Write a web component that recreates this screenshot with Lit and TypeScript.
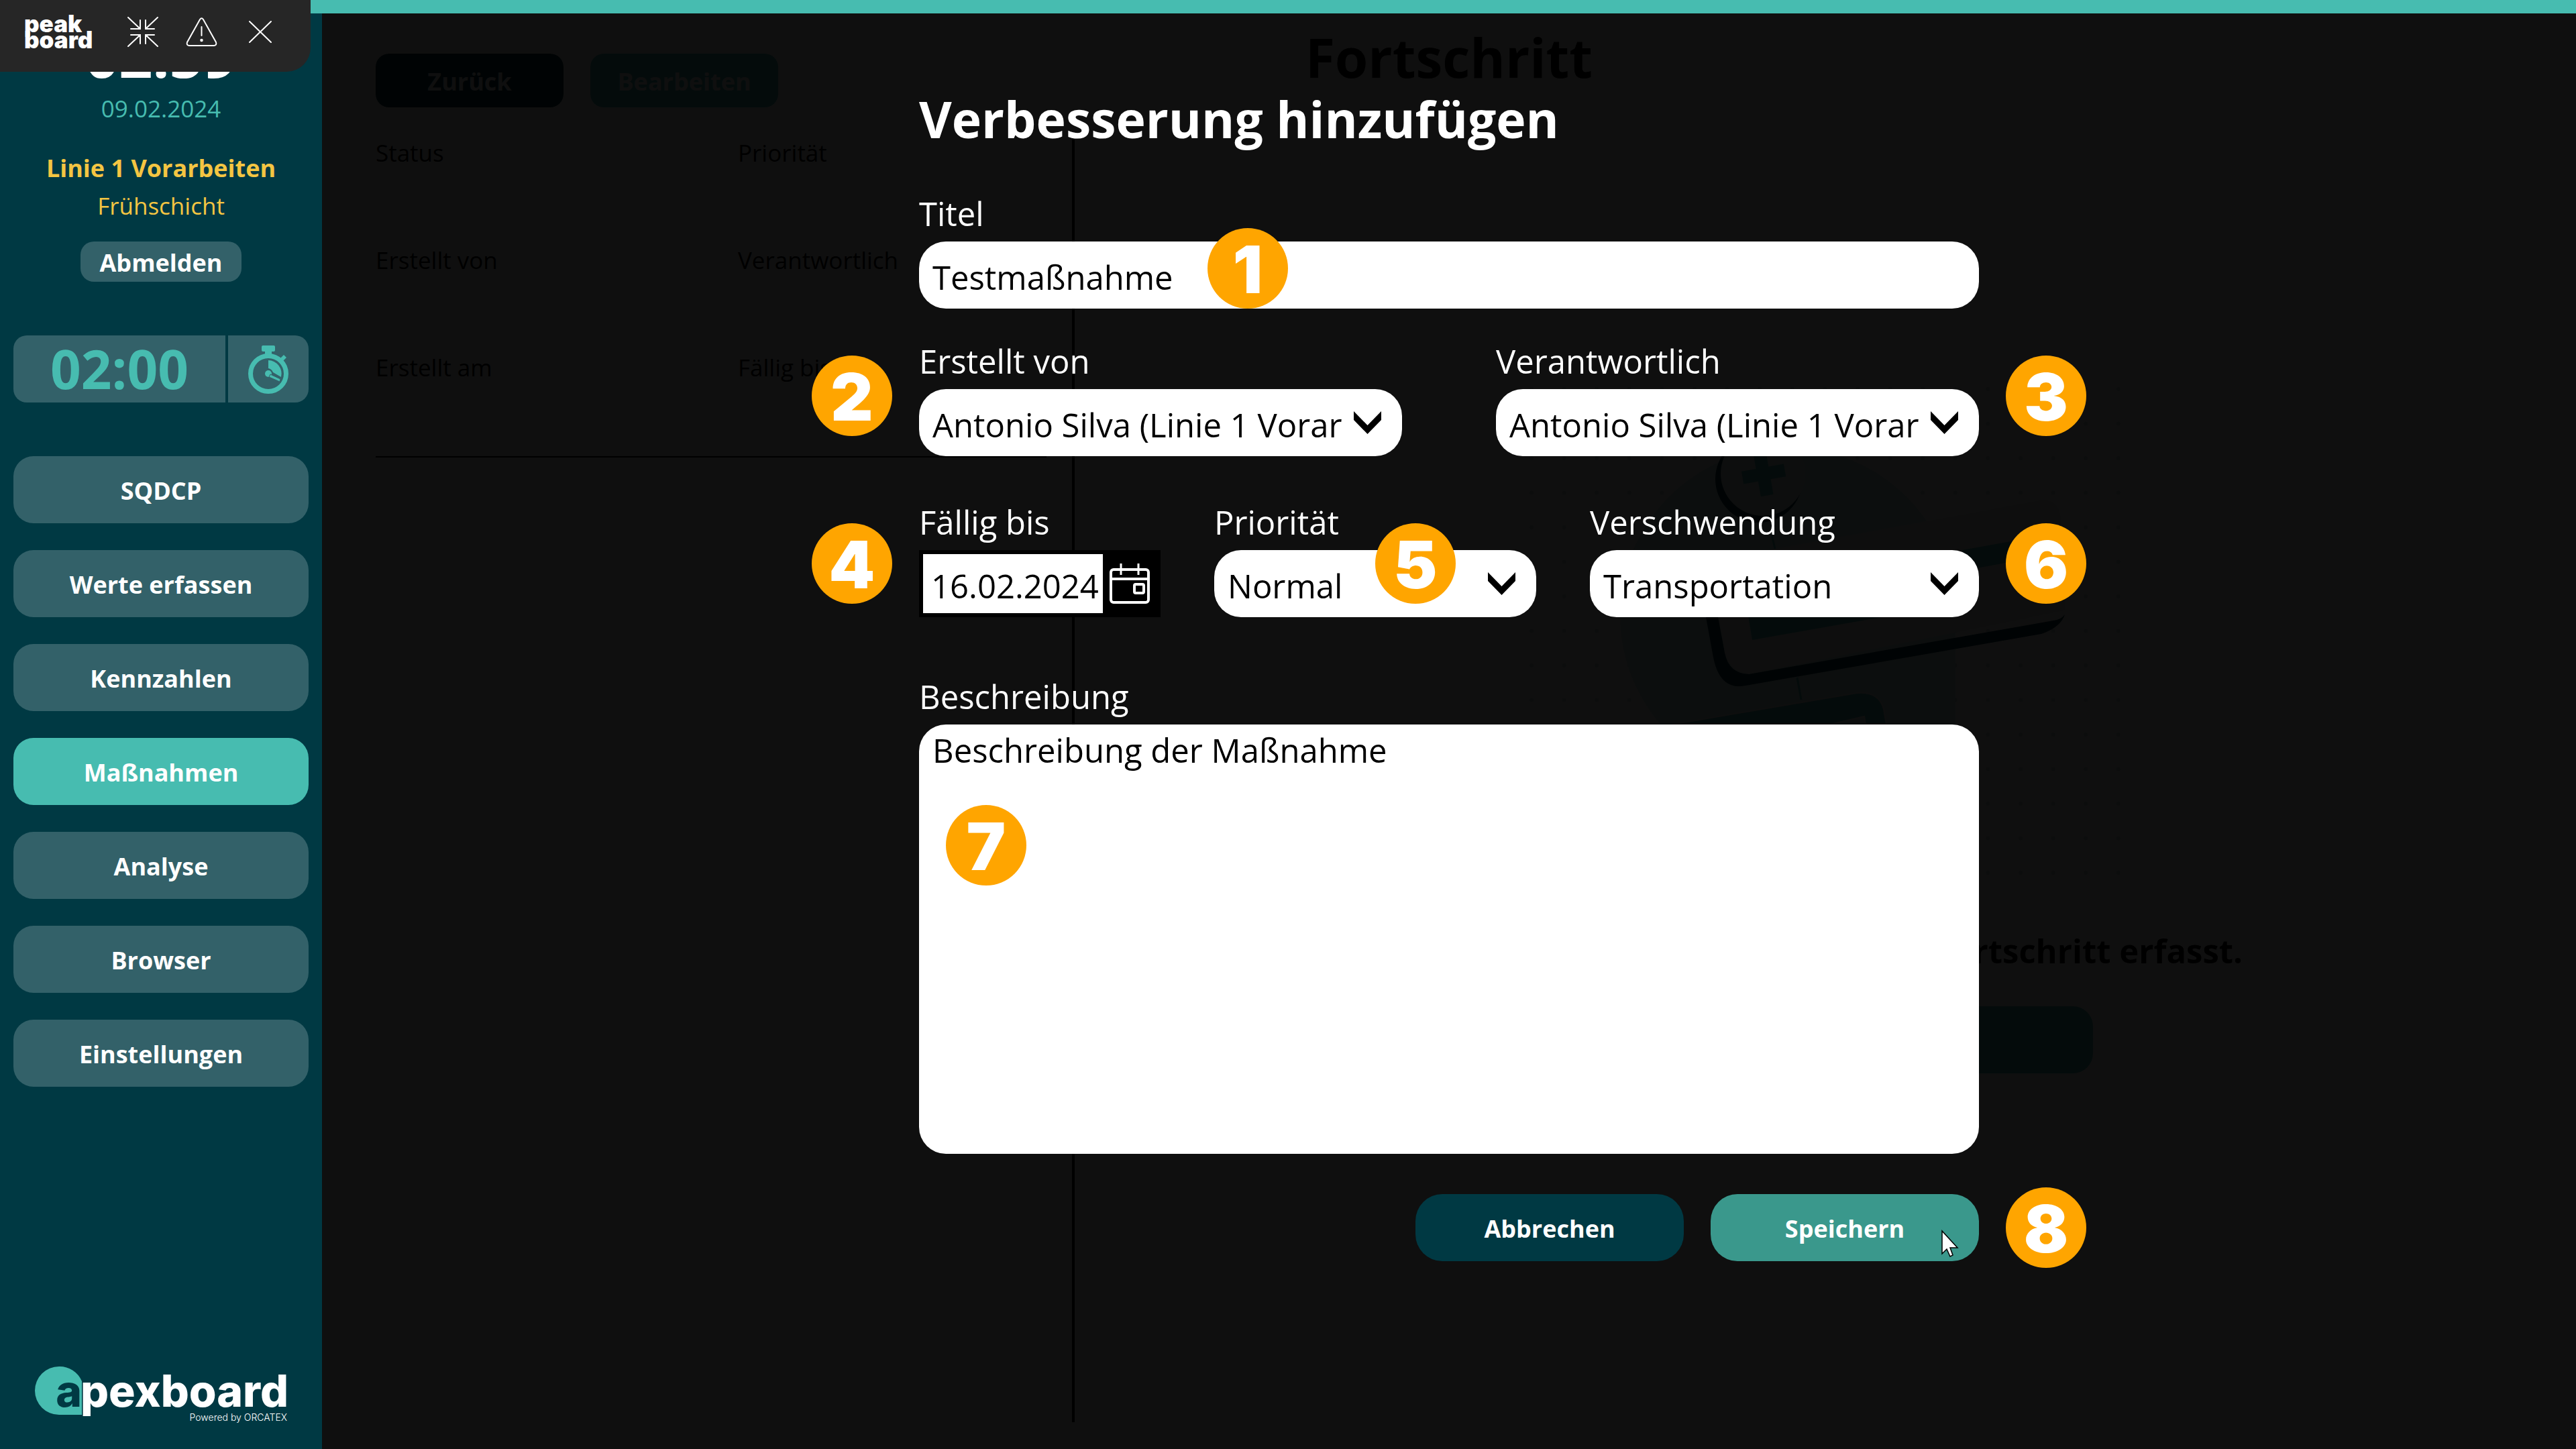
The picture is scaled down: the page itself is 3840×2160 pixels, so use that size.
import { LitElement, html, svg, css, nothing } from "lit";
import { customElement, property } from "lit/decorators.js";

const palette = css`
  * {
    box-sizing: border-box;
  }
  button,
  input,
  select,
  textarea {
    font: inherit;
    margin: 0;
    border: 0;
    outline: 0;
  }
  button {
    cursor: pointer;
  }
  svg {
    display: block;
    overflow: visible;
  }
`;

@customElement("window-bar")
class WindowBar extends LitElement {
  static styles = [
    palette,
    css`
      :host {
        position: absolute;
        top: 0;
        left: 0;
        z-index: 3;
      }
      .bar {
        display: flex;
        align-items: flex-start;
        width: 463px;
        height: 107px;
        padding: 24px 0 0 36px;
        gap: 52px;
        background: #262626;
        border-bottom-right-radius: 36px;
        color: #fff;
      }
      .brand {
        margin-top: -1px;
        width: 102px;
        font: 900 35px/24px Inter, sans-serif;
      }
      .brand span {
        display: block;
      }
      .tools {
        display: flex;
        gap: 42px;
      }
      .tool {
        width: 46px;
        height: 46px;
        padding: 0;
        background: none;
      }
    `,
  ];

  render() {
    return html`
      <div class="bar">
        <div class="brand"><span>peak</span><span>board</span></div>
        <div class="tools">
          <button class="tool" aria-label="Vollbild beenden">
            <svg width="46" height="46" fill="none" stroke="#fff" stroke-width="2" stroke-linecap="round">
              <path
                d="M1 2 19 19M19 6V19H5M45 2 27 19M27 6V19H40M1 45 19 28M19 41V28H5M45 45 27 28M27 41V28H40"
              />
            </svg>
          </button>
          <button class="tool" aria-label="Warnungen">
            <svg width="46" height="46" fill="none" stroke="#fff" stroke-width="2" stroke-linecap="round">
              <path d="M20 5Q22.500 1.500 25 5L44 39Q45.500 43.500 41 44H4Q-.5 43.500 1 39Z" />
              <path d="M22.500 16V29" />
              <circle cx="22.500" cy="36" r="1.500" fill="#fff" stroke-width="1.500" />
            </svg>
          </button>
          <button class="tool" aria-label="Schließen">
            <svg width="46" height="46" fill="none" stroke="#fff" stroke-width="2" stroke-linecap="round">
              <path d="M6 8 38 39M38 8 6 39" />
            </svg>
          </button>
        </div>
      </div>
    `;
  }
}

@customElement("side-bar")
class SideBar extends LitElement {
  static styles = [
    palette,
    css`
      :host {
        display: flex;
        flex-direction: column;
        align-items: stretch;
        padding: 14px 20px 36px;
        background: #003943;
        text-align: center;
        font-size: 35px;
        line-height: 56px;
      }
      .time {
        margin-bottom: 4px;
        font-size: 88px;
        line-height: 96px;
        font-weight: 700;
        color: #fff;
      }
      .date {
        color: #47bcb0;
      }
      .line {
        margin-top: 33px;
        font-size: 36px;
        font-weight: 700;
        color: #f4c542;
      }
      .shift {
        color: #f4c542;
      }
      .logout,
      .nav-item {
        padding: 4px 0 0;
        background: #336169;
        color: #fff;
        font-size: 36px;
        font-weight: 700;
      }
      .logout {
        align-self: center;
        width: 240px;
        height: 60px;
        margin-top: 25px;
        border-radius: 20px;
      }
      .timer {
        display: grid;
        grid-template-columns: 1fr 120px;
        gap: 4px;
        height: 100px;
        margin: 80px 0;
      }
      .timer-value {
        border-radius: 20px 0 0 20px;
        background: #336169;
        color: #47bcb0;
        font-size: 80px;
        line-height: 98px;
        font-weight: 700;
      }
      .timer-button {
        display: grid;
        place-items: center;
        padding: 0;
        border-radius: 0 20px 20px 0;
        background: #336169;
      }
      .nav {
        display: grid;
        gap: 40px;
      }
      .nav-item {
        height: 100px;
        border-radius: 30px;
      }
      .nav-item.active {
        background: #47bcb0;
      }
      .logo {
        margin: auto 0 0 32px;
      }
      .logo-word {
        font: 800 66px Inter, sans-serif;
      }
      .logo-note {
        font: 300 14px Inter, sans-serif;
      }
    `,
  ];

  private items = ["SQDCP", "Werte erfassen", "Kennzahlen", "Maßnahmen", "Analyse", "Browser", "Einstellungen"];

  render() {
    return html`
      <div class="time">02:59</div>
      <div class="date">09.02.2024</div>
      <div class="line">Linie 1 Vorarbeiten</div>
      <div class="shift">Frühschicht</div>
      <button class="logout">Abmelden</button>
      <div class="timer">
        <div class="timer-value">02:00</div>
        <button class="timer-button" aria-label="Stoppuhr">
          <svg width="62" height="74" viewBox="369 511 62 74" fill="#47bcb0">
            <rect x="390" y="513" width="20" height="9" rx="2" />
            <rect x="395" y="520" width="10" height="7" />
            <path d="M418 532 423 527 427 531 422 536Z" />
            <circle cx="400" cy="555" r="26.500" fill="none" stroke="#47bcb0" stroke-width="7" />
            <path d="M400 535A20 20 0 0 1 419 560L407 553Q405 548 400 547Z" />
            <circle cx="400" cy="555" r="5" />
            <path d="M403 556 418 563 417 567 401 560Z" stroke="#336169" stroke-width="1" />
          </svg>
        </button>
      </div>
      <nav class="nav">
        ${this.items.map(
          (item) =>
            html`<button class="nav-item ${item === "Maßnahmen" ? "active" : ""}">${item}</button>`,
        )}
      </nav>
      <svg class="logo" width="376" height="87">
        <path d="M36 0A36 36 0 0 1 70 22V72H36A36 36 0 0 1 36 0Z" fill="#47bcb0" />
        <text class="logo-word" x="70" y="60" text-anchor="end" fill="#003943">a</text>
        <text class="logo-word" x="68" y="60" fill="#fff">pexboard</text>
        <text class="logo-note" x="376" y="81" text-anchor="end" fill="#fff">Powered by ORCATEX</text>
      </svg>
    `;
  }
}

@customElement("progress-page")
class ProgressPage extends LitElement {
  static styles = [
    palette,
    css`
      :host {
        display: flex;
        flex-direction: column;
        background: #fff;
        color: #000;
        font-size: 35px;
        line-height: 56px;
      }
      .head {
        display: grid;
        height: 180px;
        padding: 15px 80px 0;
      }
      .head > * {
        grid-area: 1 / 1;
      }
      .title {
        margin: 0;
        font-size: 80px;
        line-height: 100px;
        text-align: center;
      }
      .buttons {
        display: flex;
        gap: 40px;
        margin-top: 45px;
      }
      .button {
        width: 280px;
        height: 80px;
        padding: 4px 0 0;
        border-radius: 20px;
        background: #003943;
        color: #fff;
        font-size: 36px;
        font-weight: 700;
      }
      .button.teal {
        background: #47bcb0;
      }
      .panes {
        display: grid;
        grid-template-columns: 1fr 2fr;
        flex: 1;
        margin-bottom: 40px;
      }
      .details {
        margin-right: -2px;
        padding: 0 38px 0 80px;
        border-right: 4px solid #000;
      }
      .facts {
        display: grid;
        grid-template-columns: 54fr 46fr;
        grid-auto-rows: 160px;
        margin: 0;
        border-bottom: 2px solid #000;
      }
      .facts dt {
        margin: 0;
      }
      .progress {
        display: flex;
        flex-direction: column;
        align-items: center;
        padding-top: 370px;
      }
      .empty {
        width: 1246px;
        max-width: 100%;
        margin: 75px 0 51px;
        text-align: right;
        font-size: 49px;
        line-height: 64px;
        font-weight: 700;
      }
      .wide {
        width: 800px;
        max-width: 100%;
        height: 100px;
        border-radius: 30px;
        background: #47bcb0;
      }
    `,
  ];

  private facts = ["Status", "Priorität", "Erstellt von", "Verantwortlich", "Erstellt am", "Fällig bis"];

  private art() {
    const dots = [];
    for (let row = 0; row < 15; row++) {
      for (let col = 0; col < 19; col++) {
        dots.push(svg`<circle cx=${2283 + col * 48.6} cy=${580 + row * 51.5} r="3" />`);
      }
    }
    return svg`
      <g fill="#c4d4d4">${dots}</g>
      <path d="M2665 667A250 250 0 0 1 2915 917V1167H2665A250 250 0 0 1 2665 667Z" fill="#c8e4e0" />
      <path d="M2548 836 3040 746Q3068 742 3072 770L3079 910 2607 1005Q2577 1000 2571 973Z" fill="#e4eeec" />
      <path d="M2543 920 2554 980Q2564 1030 2602 1022L3043 945Q3072 935 3078 916 3072 924 3061 925L2607 1005Q2577 1004 2571 973L2561 920Z" fill="#003943" />
      <path d="M2925 820 3020 803 3023 833 2930 850Z" fill="#47bcb0" />
      <path d="M2605 912 2850 868 2850 912 2612 954Z" fill="#47bcb0" />
      <path d="M2641 797 2646 818M2679 1010 2685 1043" stroke="#47bcb0" stroke-width="3" />
      <path d="M2492 1080 2768 1033Q2801 1030 2808 1057L2812 1080H2781L2779 1068 2728 1080Z" fill="#47bcb0" stroke="#e9efee" stroke-width="2" />
      <circle cx="2622" cy="714" r="65" fill="#003943" />
      <circle cx="2628" cy="706" r="63" fill="#dce8e6" />
      <g transform="rotate(-10 2629 706)" fill="#47bcb0">
        <rect x="2597" y="697" width="64" height="19" />
        <rect x="2619" y="673" width="19" height="66" />
      </g>`;
  }

  render() {
    return html`
      <header class="head">
        <h1 class="title">Fortschritt</h1>
        <div class="buttons">
          <button class="button">Zurück</button>
          <button class="button teal">Bearbeiten</button>
        </div>
      </header>
      <div class="panes">
        <section class="details">
          <dl class="facts">${this.facts.map((f) => html`<dt>${f}</dt>`)}</dl>
        </section>
        <section class="progress">
          <svg width="880" height="740" viewBox="2280 570 880 740">${this.art()}</svg>
          <p class="empty">Fortschritt erfasst.</p>
          <button class="wide" aria-label="Fortschritt"></button>
        </section>
      </div>
    `;
  }
}

@customElement("step-badge")
class StepBadge extends LitElement {
  @property() value = "";

  static styles = css`
    :host {
      position: absolute;
      display: grid;
      place-items: center;
      width: 120px;
      height: 120px;
      padding-top: 4px;
      box-sizing: border-box;
      border-radius: 50%;
      background: #ffa500;
      color: #fff;
      font: 900 98px/116px Inter, sans-serif;
      pointer-events: none;
    }
  `;

  render() {
    return html`${this.value}`;
  }
}

@customElement("improvement-form")
class ImprovementForm extends LitElement {
  static styles = [
    palette,
    css`
      :host {
        display: block;
        width: 1580px;
        max-width: 100%;
        color: #fff;
        font-size: 49px;
        line-height: 64px;
      }
      .title {
        margin: 0 0 59px;
        font-size: 75px;
        line-height: 100px;
        font-weight: 700;
      }
      .field {
        position: relative;
        display: flex;
        flex-direction: column;
      }
      .label {
        margin-bottom: 10px;
      }
      .people {
        display: grid;
        grid-template-columns: 1fr 1fr;
        gap: 140px;
        margin-top: 46px;
      }
      .options {
        display: grid;
        grid-template-columns: 360px 48fr 58fr;
        gap: 80px;
        margin-top: 66px;
      }
      .description {
        margin-top: 86px;
      }
      .control {
        width: 100%;
        height: 100px;
        padding: 6px 20px 0;
        border-radius: 40px;
        background: #fff;
        color: #000;
      }
      .select-box {
        display: grid;
        align-items: center;
      }
      .select-box > * {
        grid-area: 1 / 1;
      }
      .select-box .control {
        appearance: none;
        padding-right: 76px;
      }
      .chevron {
        justify-self: end;
        margin-right: 31px;
        pointer-events: none;
      }
      .date-box {
        display: flex;
        align-items: center;
        gap: 10px;
        height: 100px;
        padding: 6px 16px 6px 6px;
        background: #000;
      }
      .date-box .control {
        flex: 1;
        min-width: 0;
        height: 88px;
        padding: 6px 0 0 12px;
        border-radius: 0;
      }
      .calendar {
        width: 60px;
        height: 60px;
        padding: 0;
        background: none;
      }
      .area {
        display: block;
        height: 640px;
        resize: none;
      }
      .actions {
        position: relative;
        display: flex;
        justify-content: flex-end;
        gap: 40px;
        margin-top: 60px;
      }
      .action {
        width: 400px;
        height: 100px;
        padding: 4px 0 0;
        border-radius: 40px;
        background: #003943;
        color: #fff;
        font-size: 36px;
        font-weight: 700;
      }
      .action.save {
        background: #3a988c;
      }
      .pointer {
        position: absolute;
        right: 31px;
        top: 54px;
        pointer-events: none;
      }
      .b1 {
        left: 430px;
        bottom: 0;
      }
      .b2,
      .b4 {
        left: -160px;
      }
      .b3,
      .b6,
      .b8 {
        right: -160px;
      }
      .b2,
      .b3 {
        bottom: 30px;
      }
      .b4,
      .b5,
      .b6 {
        bottom: 20px;
      }
      .b5 {
        left: 240px;
      }
      .b7 {
        left: 40px;
        top: 194px;
      }
      .b8 {
        bottom: -10px;
      }
    `,
  ];

  private select(id: string, label: string, value: string, step: string) {
    return html`
      <div class="field">
        <label class="label" for=${id}>${label}</label>
        <div class="select-box">
          <select class="control" id=${id}>
            <option>${value}</option>
          </select>
          <svg class="chevron" width="41" height="34">
            <path d="M0 0 20.500 21 41 0V13L20.500 34 0 13Z" fill="#000" />
          </svg>
        </div>
        ${step ? html`<step-badge class="b${step}" .value=${step}></step-badge>` : nothing}
      </div>
    `;
  }

  render() {
    return html`
      <h2 class="title">Verbesserung hinzufügen</h2>
      <div class="field">
        <label class="label" for="titel">Titel</label>
        <input class="control" id="titel" type="text" .value=${"Testmaßnahme"} />
        <step-badge class="b1" .value=${"1"}></step-badge>
      </div>
      <div class="people">
        ${this.select("ersteller", "Erstellt von", "Antonio Silva (Linie 1 Vorar", "2")}
        ${this.select("verantwortlich", "Verantwortlich", "Antonio Silva (Linie 1 Vorar", "3")}
      </div>
      <div class="options">
        <div class="field">
          <label class="label" for="faellig">Fällig bis</label>
          <div class="date-box">
            <input class="control" id="faellig" type="text" .value=${"16.02.2024"} />
            <button class="calendar" aria-label="Kalender öffnen">
              <svg width="60" height="60" fill="none" stroke="#fff" stroke-width="4">
                <rect x="2" y="9" width="56" height="49" rx="4" />
                <path d="M2 23H58" />
                <path d="M17 0V17M43 0V17" stroke-width="3" />
                <rect x="37" y="31" width="14" height="13" rx="2" />
              </svg>
            </button>
          </div>
          <step-badge class="b4" .value=${"4"}></step-badge>
        </div>
        ${this.select("prioritaet", "Priorität", "Normal", "5")}
        ${this.select("verschwendung", "Verschwendung", "Transportation", "6")}
      </div>
      <div class="field description">
        <label class="label" for="beschreibung">Beschreibung</label>
        <textarea class="control area" id="beschreibung" .value=${"Beschreibung der Maßnahme"}></textarea>
        <step-badge class="b7" .value=${"7"}></step-badge>
      </div>
      <div class="actions">
        <button class="action">Abbrechen</button>
        <button class="action save">Speichern</button>
        <svg class="pointer" width="25" height="40">
          <path
            d="M1 1V35L8 28 13 39 17 37 13 26H24Z"
            fill="#fff"
            stroke="#000"
            stroke-width="1.500"
          />
        </svg>
        <step-badge class="b8" .value=${"8"}></step-badge>
      </div>
    `;
  }
}

@customElement("app-root")
class AppRoot extends LitElement {
  static styles = css`
    :host {
      position: relative;
      display: grid;
      grid-template-columns: 480px 1fr;
      grid-template-rows: 20px 1fr;
      min-height: 100vh;
      font-family: "Open Sans", "Noto Sans", sans-serif;
    }
    .accent {
      grid-column: 1 / -1;
      background: #47bcb0;
    }
    .stage {
      display: grid;
    }
    .page,
    .overlay {
      grid-area: 1 / 1;
    }
    .overlay {
      position: relative;
      z-index: 1;
      display: flex;
      justify-content: center;
      align-items: flex-start;
      padding: 107px 0 60px;
      background: rgba(0, 0, 0, 0.94);
    }
  `;

  render() {
    return html`
      <window-bar></window-bar>
      <div class="accent"></div>
      <side-bar></side-bar>
      <main class="stage">
        <progress-page class="page"></progress-page>
        <div class="overlay" role="dialog" aria-label="Verbesserung hinzufügen">
          <improvement-form></improvement-form>
        </div>
      </main>
    `;
  }
}
